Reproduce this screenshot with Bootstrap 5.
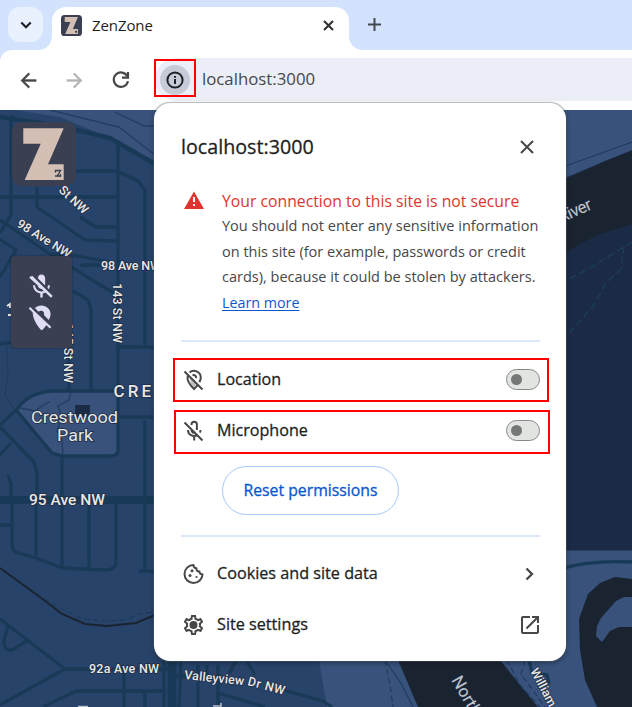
<!DOCTYPE html>
<html lang="en">
<head>
<meta charset="utf-8">
<meta name="viewport" content="width=device-width, initial-scale=1">
<title>ZenZone</title>
<link href="https://cdn.jsdelivr.net/npm/bootstrap@5.3.0/dist/css/bootstrap.min.css" rel="stylesheet">
<style>
  body { font-family: "Open Sans", "Noto Sans", sans-serif; width: 632px; height: 707px; overflow: hidden; color: #1f1f1f; }
  svg { display: block; flex: none; }
  .text-nowrap { line-height: 1.2; }
  .tabstrip { height: 50px; background: #d3e3fd; padding: 7px 0 0 8px; }
  .tab-search { width: 35px; height: 35px; border-radius: 12px; background: #e9f1fe; }
  .tab-active { width: 297px; height: 43px; margin-left: 9px; padding: 0 13px 7px 9px; border-radius: 14px 14px 0 0; background: #fff; }
  .tab-active::before, .tab-active::after { content: ""; position: absolute; bottom: 0; width: 13px; height: 13px; }
  .tab-active::before { left: -13px; background: radial-gradient(circle at 0 0, transparent 12.5px, #fff 13px); }
  .tab-active::after { right: -13px; background: radial-gradient(circle at 100% 0, transparent 12.5px, #fff 13px); }
  .tab-title { font-size: 15px; margin-left: 10px; letter-spacing: -.1px; }
  .tab-add { height: 35px; margin-left: 17px; }
  .strip-base { background: #d3e3fd; }
  .toolbar { height: 60px; background: #fff; border-radius: 12px 0 0 0; padding-left: 17px; }
  .toolbar-icons { gap: 23px; }
  .omnibox { height: 43px; margin: 8px 0 0 22px; background: #ebeef7; border-radius: 22px 0 0 22px; }
  .mark-box { border: 2px solid #f00; }
  .info-box { width: 42px; height: 38px; margin: 1px 0 0 -1px; }
  .info-dot { width: 30px; height: 30px; background: #c7cbd8; margin-top: 4px; }
  .url { font-size: 16.8px; color: #45474b; margin: 0 0 0 6px; }
  .map-view { background: #28436a; }
  .map-view text { font-family: Roboto, sans-serif; fill: #e9e8e4; stroke: #1d2c45; stroke-width: 1.5px; paint-order: stroke; font-weight: 500; font-size: 12.5px; }
  .map-view .lbl-area { font-size: 17px; }
  .map-view .lbl-park { font-size: 17px; font-weight: 400; }
  .map-view .lbl-avenue { font-size: 14px; }
  .map-view .lbl-water { font-size: 17px; font-weight: 400; fill: #c1c5cb; }
  .road { fill: none; stroke: #193a57; stroke-width: 3.3; stroke-linejoin: round; }
  .info-popup { left: 154px; top: -7px; width: 412px; height: 557.5px; padding: 24px 0 0 1px; background: #fff; border-radius: 16px; box-shadow: 0 0 1px 1px rgba(90,100,110,.4), 0 2px 5px rgba(0,0,0,.35); }
  .inset { margin-left: 26px; margin-right: 26px; }
  .popup-title { height: 40px; font-size: 19.7px; -webkit-text-stroke: .3px; }
  .notice { margin-top: 21px; line-height: 25.6px; white-space: nowrap; height: 128px; }
  .notice-copy { margin-left: 16px; font-size: 14.5px; color: #474747; }
  .notice-head { font-size: 15.75px; color: #dc362e; padding-top: 1px; height: 25px; }
  .learn { color: #0b57d0; text-underline-offset: 2px; font-size: 14.3px; }
  .rule { height: 2px; background: #dbe8fb; }
  .rule-links { margin-top: 20px; margin-bottom: 11px; }
  .perm-row { height: 44px; padding: 0 7px; width: 376px; font-size: 16.1px; -webkit-text-stroke: .3px; }
  .perm-location { margin: 16px 0 0 18px; }
  .perm-mic { margin: 8px 0 0 19px; padding: 0 8px 3px 6px; }
  .perm-location .toggle { margin-bottom: 2px; }
  .perm-label { margin-left: 11px; }
  .toggle { width: 34px; height: 21px; border: 1.5px solid #858985; border-radius: 11px; background: #e1e4e1; padding-left: 4px; }
  .toggle span { width: 11px; height: 11px; border-radius: 50%; background: #747775; }
  .btn-reset, .btn-reset:hover { width: 177px; height: 49px; margin: 12px 0 0 67px; border: 1px solid #a8c7fa; border-radius: 25px; color: #0b57d0; font-size: 15.8px; padding: 0; -webkit-text-stroke: .3px; }
  .link-row { height: 51px; font-size: 16.2px; -webkit-text-stroke: .3px; }
  .open-icon { margin-right: -2px; }
  .map-logo { left: 12px; top: 12px; }
  .map-controls { left: 11px; top: 146px; width: 61px; height: 92px; border-radius: 4px; background: #3a4052; box-shadow: 0 0 2px rgba(0,0,0,.5); gap: 2px; padding-right: 1px; }
</style>
</head>
<body class="d-flex flex-column m-0">
<header class="tabstrip d-flex flex-shrink-0">
  <div class="tab-search d-flex align-items-center justify-content-center">
    <svg width="14" height="14" viewBox="0 0 14 14"><path d="M2.300 4.500 7 9.200l4.700-4.700" fill="none" stroke="#202124" stroke-width="2.200"/></svg>
  </div>
  <div class="tab-active position-relative d-flex align-items-center">
    <svg width="21" height="21" viewBox="0 0 64 64"><rect width="64" height="64" rx="11" fill="#3a4052"/><path d="M11.300 6.300h40.400L36 42.300h15.700V58h-39l16-36.300H11.300z" fill="#d3bfb3"/><path d="M43 48h6v6h-6z" fill="#3a4052"/></svg>
    <span class="tab-title text-nowrap">ZenZone</span>
    <svg class="ms-auto" width="15" height="15" viewBox="0 0 15 15"><path d="M3 3l9 9M12 3l-9 9" stroke="#303134" stroke-width="2.100"/></svg>
  </div>
  <div class="tab-add d-flex align-items-center">
    <svg width="17" height="17" viewBox="0 0 17 17"><path d="M8.500 2v13M2 8.500h13" stroke="#44484e" stroke-width="2"/></svg>
  </div>
</header>
<div class="strip-base flex-shrink-0">
  <nav class="toolbar d-flex align-items-start">
    <div class="toolbar-icons d-flex align-items-center h-100">
      <svg width="23" height="23" viewBox="0 0 24 24"><path fill="#474747" stroke="#474747" stroke-width=".4" d="M20 11H7.830l5.590-5.590L12 4l-8 8 8 8 1.410-1.410L7.830 13H20v-2z"/></svg>
      <svg width="23" height="23" viewBox="0 0 24 24"><path fill="#b5b5b5" stroke="#b5b5b5" stroke-width=".4" transform="matrix(-1 0 0 1 24 0)" d="M20 11H7.830l5.590-5.590L12 4l-8 8 8 8 1.410-1.410L7.830 13H20v-2z"/></svg>
      <svg width="24" height="24" viewBox="0 0 24 24"><g fill="none" stroke="#474747" stroke-width="2.200"><path d="M18.300 8.200A7.200 7.200 0 1 0 19 13.300"/><path d="M19 4v5.600h-6"/></g></svg>
    </div>
    <div class="omnibox d-flex align-items-start flex-grow-1">
      <div class="info-box mark-box d-flex justify-content-center">
        <div class="info-dot rounded-circle d-flex align-items-center justify-content-center">
          <svg width="18" height="18" viewBox="0 0 18 18"><circle cx="9" cy="9" r="7.600" fill="none" stroke="#202124" stroke-width="2"/><path d="M8 4.900h2v1.900H8zM8 8h2v5H8z" fill="#202124"/></svg>
        </div>
      </div>
      <span class="url text-nowrap align-self-center">localhost:3000</span>
    </div>
  </nav>
</div>
<main class="map-view position-relative flex-grow-1">
  <svg width="632" height="597" viewBox="0 110 632 597">
    <!-- parkland -->
    <path d="M15 110 60 117 110 138 155 167V110z" fill="#38527b"/>
    <path d="M17 409 35 394 55 390H118V455H62L52 452z" fill="#38527b"/>
    <path d="M560 110H632V190H560z" fill="#38527b"/>
    <path d="M318 655H555V550H632V707H327z" fill="#38527b"/>
    <path d="M75 405H90V417H75z" fill="#1b2b45"/>
    <!-- river valley -->
    <path d="M560 180 632 150V550.500H560z" fill="#1b2b45"/>
    <path d="M560 182 605 161 632 151V224L600 234 580 244 560 257z" fill="#1a2431"/>
    <path d="M398 660H500L538 707H418z" fill="#1a2431"/>
    <path d="M632 579 615 577 600 583 588 594 579 619 580 650 585 680 597 707H632V627H619L610 631 602 642 596 636 597 626 601 618 616 601 624 597H632z" fill="#1a2431"/>
    <g class="road">
      <path d="M0 117 60 126 110 138 155 164" stroke-width="4.500"/>
      <path d="M13 115 11 122V215L0 233M0 197H117M0 220 50 254M0 239 16 250 0 277M50 254 78 256 110 262M76 171H117M118 143V262M119 172 138 181 145 190V346M37 187V207L85 240 117 241M80 217 96 227H117M80 265H102M50 254 120 297M73 291 88 300 91 310V390M118 347H155"/>
      <path d="M118 260V450Q118 456 111 456H62L52 453 17 411M145 420V570M118 417H155M0 425 17 409 Q30 391 55 391H118M0 344 14 342M69 346V390M0 427 34 462 37 473V500M0 455 11 443M8 475 11 484V498M62 457V568"/>
      <path d="M0 500H155" stroke-width="8"/>
      <path d="M12 500V545Q12 551 18 553L36 558 62 568 105 570Q116 570 116 562V500M36 500V556M89 500V568M139 571H155M0 525H12"/>
      <path d="M0 619 65 669H168M65 669 0 705M43 707 76 691H163M124 669V707M145 691V707M8 626 4 640Q3 651 12 650L27 641"/>
      <path d="M172 660V707" stroke-width="9"/>
      <path d="M164 660V707M181 660 179 707M198 665V707M218 665V707M207 665V679M229 674 236 660M246 660 255 675M176 676H190M218 693 265 707M283 690 323 701 332 707"/>
      <path d="M560 569Q590 560 632 562M529 660 532 673 547 675 549 684"/>
    </g>
    <g fill="none" stroke="#1f3d61" stroke-width="1.300">
      <path d="M50 110 119 127 155 155M115 112 144 126H155M560 168 632 142M7 344 8 375 5 395 14 409M20 408 35 411 45 404 50 402M71 392 69 400 58 406 62 417 57 431 62 440 63 455M385 660 402 685 413 707"/>
      <path d="M560 284 590 268 632 242M569 333 594 305 606 283 621 269 624 247" stroke="#1b4057" stroke-dasharray="7 4"/>
      <path d="M507 660 520 685 540 707M525 660 521 674 545 707M385 660 390 685 393 707" stroke-dasharray="6 3"/>
    </g>
    <path d="M0 568 44 600 62 614 85 624 107 626 136 623 155 615" fill="none" stroke="#1a2431" stroke-width="2"/>
    <path d="M44 599 62 609 82 619 105 621 125 620 140 614 155 612" fill="none" stroke="#193a57" stroke-dasharray="6 3"/>
    <!-- labels -->
    <text transform="translate(58 191) rotate(43)" textLength="35">St NW</text>
    <text transform="translate(16 226) rotate(32)" textLength="61">98 Ave NW</text>
    <text x="101" y="270" textLength="60">98 Ave NW</text>
    <text transform="translate(113 283) rotate(90)" textLength="60">143 St NW</text>
    <text transform="translate(64 323) rotate(90)" textLength="60">145 St NW</text>
    <path d="M7 306 10 304V308M8 315H11" stroke="#e9e8e4" stroke-width="1.800" fill="none"/>
    <text class="lbl-area" x="113.500" y="397" textLength="51">CRES</text>
    <text class="lbl-park" x="31" y="423" textLength="87" lengthAdjust="spacingAndGlyphs">Crestwood</text>
    <text class="lbl-park" x="57" y="441" textLength="36" lengthAdjust="spacingAndGlyphs">Park</text>
    <text class="lbl-avenue" x="29" y="505" textLength="76" lengthAdjust="spacingAndGlyphs">95 Ave NW</text>
    <text x="89" y="673" textLength="70">92a Ave NW</text>
    <text transform="translate(184 679) rotate(6)" textLength="60">Valleyview</text>
    <text transform="translate(247 685) rotate(15)" textLength="38">Dr NW</text>
    <path d="M78 706.500H88M213 706H221V703" stroke="#b9bec6" stroke-width="1.500" fill="none"/>
    <text class="lbl-water" transform="translate(561 223) rotate(-24)" textLength="35">River</text>
    <text class="lbl-water" transform="translate(451 680) rotate(60)">North</text>
    <text transform="translate(530 671) rotate(62)">William</text>
  </svg>

  <svg class="map-logo position-absolute" width="64" height="64" viewBox="0 0 64 64"><rect width="64" height="64" rx="9" fill="#3a4052"/><path d="M11.300 6.300h40.400L36 42.300h15.700V58h-39l16-36.300H11.300z" fill="#d3bfb3"/><path d="M43 48.500h5.500l-3.200 5.500h3.700M43.500 48v2.500M48.500 52v3M43 54h3" stroke="#3a4052" stroke-width="1.400" fill="none"/></svg>
  <div class="map-controls position-absolute d-flex flex-column align-items-center justify-content-center">
    <svg width="29" height="29" viewBox="0 0 24 24"><path fill="#dfdcf6" d="M19 11h-1.700c0 .74-.16 1.430-.43 2.050l1.230 1.230c.56-.98.9-2.090.9-3.280zm-4.020.17c0-.06.02-.11.02-.17V5c0-1.660-1.340-3-3-3S9 3.340 9 5v.18l5.980 5.990zM4.270 3L3 4.270l6.010 6.010V11c0 1.660 1.330 3 2.990 3 .22 0 .44-.03.65-.08l1.660 1.660c-.71.33-1.500.52-2.310.52-2.760 0-5.300-2.100-5.300-5.100H5c0 3.410 2.720 6.230 6 6.720V21h2v-3.280c.91-.13 1.770-.45 2.540-.9L19.730 21 21 19.730 4.270 3z"/><path d="M2.500 4 20.500 20.500" stroke="#dfdcf6" stroke-width="1.800"/></svg>
    <svg width="29" height="29" viewBox="0 0 24 24"><path fill="#dfdcf6" d="M12 2c3.900 0 7.500 3 7.500 7 0 1.700-.6 3.300-1.500 5l-4-4c.6-2-.6-3.500-2.500-3.500-.8 0-1.400.3-1.900.8L6.500 4.200C8 2.800 9.800 2 12 2zM4.700 7.300 16.300 18C14.500 20.500 13 22.500 12 22.500 9.500 20.500 4.500 13.500 4.700 7.300z"/><path d="M2 4 19.500 20.500" stroke="#dfdcf6" stroke-width="1.800"/></svg>
  </div>

  <section class="info-popup position-absolute">
    <div class="popup-title inset d-flex align-items-center justify-content-between">
      <span class="text-nowrap">localhost:3000</span>
      <svg class="me-1" width="18" height="18" viewBox="0 0 18 18"><path d="M3 3l12 12M15 3 3 15" stroke="#474747" stroke-width="2"/></svg>
    </div>
    <div class="notice inset d-flex">
      <svg width="25" height="25" viewBox="0 0 25 25"><path d="M13 3.500 23 21H3z" fill="#dc362e"/><path d="M12 9h2v5h-2zM12 16h2v2h-2z" fill="#fff"/></svg>
      <div class="notice-copy">
        <div class="notice-head">Your connection to this site is not secure</div>
        <div>You should not enter any sensitive information<br>on this site (for example, passwords or credit<br>cards), because it could be stolen by attackers.</div>
        <a class="learn" href="#">Learn more</a>
      </div>
    </div>
    <div class="rule inset mt-4"></div>
    <div class="perm-row perm-location mark-box d-flex align-items-center">
      <svg width="24" height="24" viewBox="0 0 24 24"><g fill="none" stroke="#474747" stroke-width="2"><path d="M7.500 4.500C11.500 1 18.800 3.300 18.800 9.800c0 1.500-.6 2.900-1.500 4.300M5.700 8C4.500 12.500 8.500 17.500 12 21c1.400-1.300 2.500-2.600 3.500-3.900M2.500 3.500l18 18"/><path d="M10.500 7.300c2-1 4 .6 3.500 2.800"/></g><path d="M8 10l6 6-2 4-3-4z" fill="#474747" opacity=".35"/></svg>
      <span class="perm-label text-nowrap me-auto">Location</span>
      <span class="toggle d-flex align-items-center"><span></span></span>
    </div>
    <div class="perm-row perm-mic mark-box d-flex align-items-center">
      <svg width="24" height="24" viewBox="0 0 24 24"><g fill="none" stroke="#474747" stroke-width="2"><path d="M2.500 3.500l18 18M9.500 6V5.400a2.700 2.700 0 0 1 5.400 0V11M9.500 10.500c0 2.500 1.500 3.600 3.500 3.300M6 11c0 5 5.200 7.200 9 5.200M18.500 11c0 1-.2 1.800-.6 2.600M12.200 17v4.500"/></g></svg>
      <span class="perm-label text-nowrap me-auto">Microphone</span>
      <span class="toggle d-flex align-items-center"><span></span></span>
    </div>
    <button type="button" class="btn btn-reset d-block text-nowrap">Reset permissions</button>
    <div class="rule rule-links inset"></div>
    <div class="link-row inset d-flex align-items-center">
      <svg width="25" height="24" viewBox="0 0 24 24"><path d="M12 3a9 9 0 1 0 9 9.200c-1.700.2-3-.8-3-2.700-2.200.2-3.400-1.200-3-3.200-1.900-.1-3-1.300-3-3.300z" fill="none" stroke="#474747" stroke-width="2" stroke-linejoin="round"/><g fill="#474747"><circle cx="10.500" cy="8.700" r="1.500"/><circle cx="8.500" cy="13.500" r="1.500"/><circle cx="15" cy="15" r="1.100"/></g></svg>
      <span class="perm-label text-nowrap me-auto">Cookies and site data</span>
      <svg width="21" height="20" viewBox="0 0 21 20"><path d="M7.500 4.500 13 10l-5.500 5.500" fill="none" stroke="#474747" stroke-width="2.300"/></svg>
    </div>
    <div class="link-row inset d-flex align-items-center">
      <svg width="25" height="24" viewBox="0 0 24 24"><path fill="#474747" d="M19.430 12.980c.04-.32.07-.64.07-.98 0-.34-.03-.66-.07-.98l2.110-1.650c.19-.15.24-.42.12-.64l-2-3.460c-.09-.16-.26-.25-.44-.25-.06 0-.12.01-.17.03l-2.490 1c-.52-.4-1.080-.73-1.690-.98l-.38-2.650C14.460 2.180 14.250 2 14 2h-4c-.25 0-.46.18-.49.42l-.38 2.650c-.61.25-1.170.59-1.690.98l-2.490-1c-.06-.02-.12-.03-.18-.03-.17 0-.34.09-.43.25l-2 3.460c-.13.22-.07.49.12.64l2.110 1.650c-.04.32-.07.65-.07.98 0 .33.03.66.07.98l-2.110 1.650c-.19.15-.24.42-.12.64l2 3.460c.09.16.26.25.44.25.06 0 .12-.01.17-.03l2.490-1c.52.4 1.080.73 1.690.98l.38 2.650c.03.24.24.42.49.42h4c.25 0 .46-.18.49-.42l.38-2.650c.61-.25 1.170-.59 1.690-.98l2.490 1c.06.02.12.03.18.03.17 0 .34-.09.43-.25l2-3.460c.12-.22.07-.49-.12-.64l-2.110-1.650zm-1.980-1.710c.04.31.05.52.05.73 0 .21-.02.43-.05.73l-.14 1.130.89.7 1.080.84-.7 1.210-1.270-.51-1.040-.42-.9.68c-.43.32-.84.56-1.250.73l-1.060.43-.16 1.130-.2 1.350h-1.400l-.19-1.350-.16-1.130-1.060-.43c-.43-.18-.83-.41-1.230-.71l-.91-.7-1.060.43-1.270.51-.7-1.210 1.080-.84.89-.7-.14-1.130c-.03-.31-.05-.54-.05-.74s.02-.43.05-.73l.14-1.130-.89-.7-1.080-.84.7-1.210 1.270.51 1.040.42.9-.68c.43-.32.84-.56 1.250-.73l1.060-.43.16-1.130.2-1.350h1.390l.19 1.350.16 1.130 1.060.43c.43.18.83.41 1.230.71l.91.7 1.060-.43 1.270-.51.7 1.210-1.070.85-.89.7.14 1.130z"/><circle cx="12" cy="12" r="4" fill="#474747"/></svg>
      <span class="perm-label text-nowrap me-auto">Site settings</span>
      <svg class="open-icon" width="24" height="24" viewBox="0 0 24 24"><path fill="#474747" d="M19 19H5V5h7V3H5c-1.110 0-2 .9-2 2v14c0 1.100.89 2 2 2h14c1.100 0 2-.9 2-2v-7h-2v7zM14 3v2h3.590l-9.830 9.830 1.410 1.410L19 6.410V10h2V3h-7z"/></svg>
    </div>
  </section>
</main>
<script src="https://cdn.jsdelivr.net/npm/bootstrap@5.3.0/dist/js/bootstrap.bundle.min.js"></script>
</body>
</html>
